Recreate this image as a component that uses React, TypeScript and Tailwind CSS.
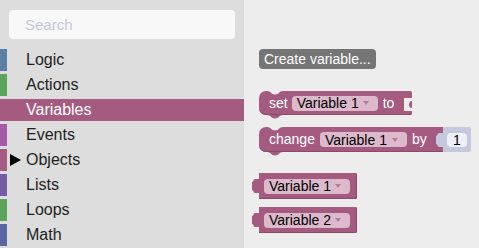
import React from "react";

const FONT = { fontFamily: '"Liberation Sans", Arial, sans-serif' };

const categories = [
  { label: "Logic", bar: "bg-[#5b80a5]" },
  { label: "Actions", bar: "bg-[#5ba55b]" },
  { label: "Variables", bar: "bg-[#a55b80]", selected: true },
  { label: "Events", bar: "bg-[#a55ba5]" },
  { label: "Objects", bar: "bg-[#a55b80]", arrow: true },
  { label: "Lists", bar: "bg-[#745ba5]" },
  { label: "Loops", bar: "bg-[#5ba55b]" },
  { label: "Math", bar: "bg-[#5b67a5]" },
];

function Sidebar() {
  return (
    <aside className="flex h-[248px] w-[244px] shrink-0 flex-col bg-[#dddddd]">
      <div className="px-[9px] pt-[10px]">
        <input
          placeholder="Search"
          className="h-[29px] w-full rounded-[4px] bg-[#f8f8f8] pl-[16px] text-[15px] outline-none placeholder:text-[#c5c7d8]"
        />
      </div>
      <nav className="mt-[10px] flex flex-col gap-[3px]">
        {categories.map((c) => (
          <div
            key={c.label}
            className={
              "flex h-[22px] items-center text-[16px] " +
              (c.selected ? "bg-[#a55b80] text-white" : "text-[#1e1e1e]")
            }
          >
            <span className={"h-full w-[7px] " + c.bar} />
            <span className="flex w-[19px] items-center pl-[3px]">
              {c.arrow && (
                <svg width="11" height="12" viewBox="0 0 11 12">
                  <path d="M0 0 L11 6 L0 12 Z" fill="#000" />
                </svg>
              )}
            </span>
            <span>{c.label}</span>
          </div>
        ))}
      </nav>
    </aside>
  );
}

function Pill({ label, className = "" }: { label: string; className?: string }) {
  return (
    <span
      className={
        "flex h-[15px] w-[86px] shrink-0 items-center justify-between rounded-[4px] bg-[#dcbacb] pl-[5px] pr-[9px] text-[14px] leading-none text-black " +
        className
      }
    >
      <span>{label}</span>
      <svg width="6" height="4" viewBox="0 0 6 4">
        <path d="M0 0 H6 L3 4 Z" fill="#b27d98" />
      </svg>
    </span>
  );
}

// dip in the top edge of a statement block
function TopNotch() {
  return (
    <svg className="absolute left-[8px] top-0" width="16" height="4" viewBox="0 0 16 4">
      <path d="M0 0 C4 0 4 3.5 8 3.5 C12 3.5 12 0 16 0 Z" fill="#ededed" />
    </svg>
  );
}

// bump under a statement block
function BottomBump() {
  return (
    <svg className="absolute left-[8px] top-full" width="16" height="4" viewBox="0 0 16 4">
      <path d="M0 0 C4 0 4 3.5 8 3.5 C12 3.5 12 0 16 0 Z" fill="#a55b80" />
    </svg>
  );
}

function OutputTab({ fill }: { fill: string }) {
  return (
    <svg className="absolute left-[-7px] top-[6px]" width="7" height="14" viewBox="0 0 7 14">
      <path d="M7 0 H3 C1 0 2 3 0 3 V11 C2 11 1 14 3 14 H7 Z" fill={fill} />
    </svg>
  );
}

function VariableGetter({ label }: { label: string }) {
  return (
    <div className="relative flex h-[26px] w-[98px] items-center rounded-r-[2px] bg-[#a55b80] pl-[5px] shadow-[inset_0_-1px_0_#8c4a6b,inset_-1px_0_0_#8c4a6b]">
      <OutputTab fill="#a55b80" />
      <Pill label={label} />
    </div>
  );
}

function Workspace() {
  return (
    <main className="flex h-[248px] flex-1 flex-col items-start bg-[#ededed] pl-[15px] text-[14px] text-white">
      <button className="mt-[49px] h-[20px] rounded-[4px] bg-[#757575] px-[5px] leading-[20px] text-white">
        Create variable...
      </button>

      {/* set Variable 1 to */}
      <div className="relative mt-[22px] flex h-[24px] w-[153px] items-center rounded-l-[7px] rounded-r-[2px] bg-[#a55b80] pl-[10px] shadow-[inset_0_-1px_0_#8c4a6b]">
        <TopNotch />
        <BottomBump />
        <span>set</span>
        <Pill label="Variable 1" className="ml-[4px]" />
        <span className="ml-[5px]">to</span>
        <svg className="absolute right-0 top-[7px]" width="8" height="13" viewBox="0 0 8 13">
          <path d="M8 0 H0 V13 H8 V10 C4 10 4 3 8 3 Z" fill="#ededed" />
        </svg>
      </div>

      {/* change Variable 1 by 1 */}
      <div className="mt-[12px] flex">
        <div className="relative flex h-[25px] w-[184px] items-center rounded-l-[7px] bg-[#a55b80] pl-[10px] shadow-[inset_0_-1px_0_#8c4a6b]">
          <TopNotch />
          <BottomBump />
          <span>change</span>
          <Pill label="Variable 1" className="ml-[5px] w-[87px]" />
          <span className="ml-[5px]">by</span>
        </div>
        <div className="relative flex h-[25px] w-[28px] items-center rounded-r-[2px] bg-[#c4c9de] pl-[4px]">
          <OutputTab fill="#c4c9de" />
          <span className="flex h-[14px] w-[20px] items-center justify-center rounded-[4px] bg-[#eef0f7] text-[14px] leading-none text-black">
            1
          </span>
        </div>
      </div>

      <div className="mt-[21px]">
        <VariableGetter label="Variable 1" />
      </div>
      <div className="mt-[8px]">
        <VariableGetter label="Variable 2" />
      </div>
    </main>
  );
}

export default function App() {
  return (
    <div className="flex h-[248px] w-[479px] overflow-hidden" style={FONT}>
      <Sidebar />
      <Workspace />
    </div>
  );
}
